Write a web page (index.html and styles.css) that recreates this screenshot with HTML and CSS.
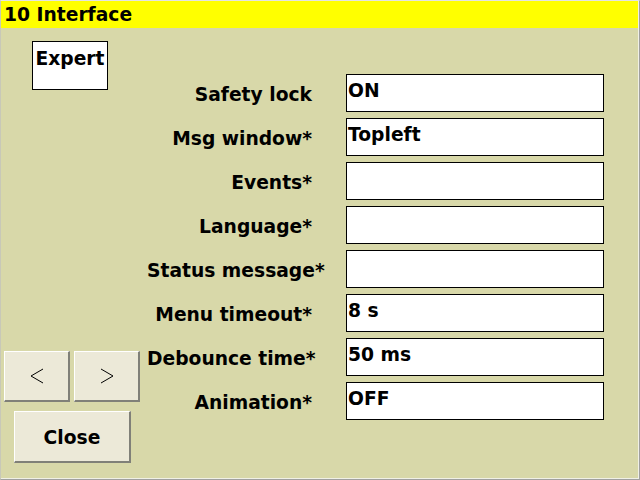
FILE: index.html
```html
<!DOCTYPE html>
<html>
<head>
<meta charset="utf-8">
<link rel="stylesheet" href="styles.css">
</head>
<body>
<div class="frame">
  <div class="titlebar">10 Interface</div>
  <div class="content">
    <div class="side">
      <div class="expert">Expert</div>
      <div class="nav">
        <div class="btn navbtn"><svg width="14" height="16" viewBox="0 0 14 16"><polyline points="13,1 1,8 13,15" fill="none" stroke="#000" stroke-width="1"/></svg></div>
        <div class="btn navbtn"><svg width="14" height="16" viewBox="0 0 14 16"><polyline points="1,1 13,8 1,15" fill="none" stroke="#000" stroke-width="1"/></svg></div>
      </div>
      <div class="btn close">Close</div>
    </div>
    <div class="form">
      <div class="label">Safety lock</div><div class="field">ON</div>
      <div class="label">Msg window*</div><div class="field">Topleft</div>
      <div class="label">Events*</div><div class="field"></div>
      <div class="label">Language*</div><div class="field"></div>
      <div class="label">Status message*</div><div class="field"></div>
      <div class="label">Menu timeout*</div><div class="field">8 s</div>
      <div class="label">Debounce time*</div><div class="field">50 ms</div>
      <div class="label">Animation*</div><div class="field">OFF</div>
    </div>
  </div>
</div>
</body>
</html>
```

FILE: styles.css
```css
html, body {
  margin: 0;
  padding: 0;
}
body {
  width: 640px;
  height: 480px;
  overflow: hidden;
  font-family: "DejaVu Sans", Verdana, sans-serif;
  font-weight: bold;
  font-size: 18.7px;
  color: #000;
}
.frame {
  box-sizing: border-box;
  width: 640px;
  height: 480px;
  background: #d8d8a9;
  border: 1px solid;
  border-color: #e4e4e4 #a0a0a0 #a0a0a0 #c8c8b8;
  box-shadow: inset -1px -1px 0 #f0f0e6;
  display: flex;
  flex-direction: column;
}
.titlebar {
  height: 27px;
  background: #ffff00;
  line-height: 28px;
  padding-left: 3px;
  margin-right: 1px;
}
.content {
  flex: 1;
  display: flex;
}
.side {
  width: 143px;
  display: flex;
  flex-direction: column;
  padding: 13px 0 16px 3px;
  box-sizing: border-box;
}
.expert {
  box-sizing: border-box;
  margin-left: 28px;
  width: 76px;
  height: 49px;
  background: #fff;
  border: 1px solid #000;
  text-align: center;
  line-height: 28px;
  padding-top: 3px;
}
.nav {
  margin-top: auto;
  display: flex;
  gap: 4px;
}
.btn {
  box-sizing: border-box;
  background: #ece9d8;
  border-style: solid;
  border-width: 1px 2px 2px 1px;
  border-color: #ffffff #808078 #808078 #ffffff;
  display: flex;
  align-items: center;
  justify-content: center;
}
.navbtn {
  width: 66px;
  height: 51px;
}
.close {
  margin-top: 9px;
  margin-left: 10px;
  width: 117px;
  height: 52px;
  padding-top: 1px;
}
.form {
  margin-top: 46px;
  margin-left: 3px;
  display: grid;
  grid-template-columns: 165px 258px;
  grid-auto-rows: 38px;
  column-gap: 34px;
  row-gap: 6px;
  align-content: start;
}
.label {
  text-align: right;
  white-space: nowrap;
  padding-top: 10px;
}
.field {
  box-sizing: border-box;
  background: #fff;
  border: 1px solid #000;
  padding: 5px 1px 0;
  white-space: nowrap;
}
```
